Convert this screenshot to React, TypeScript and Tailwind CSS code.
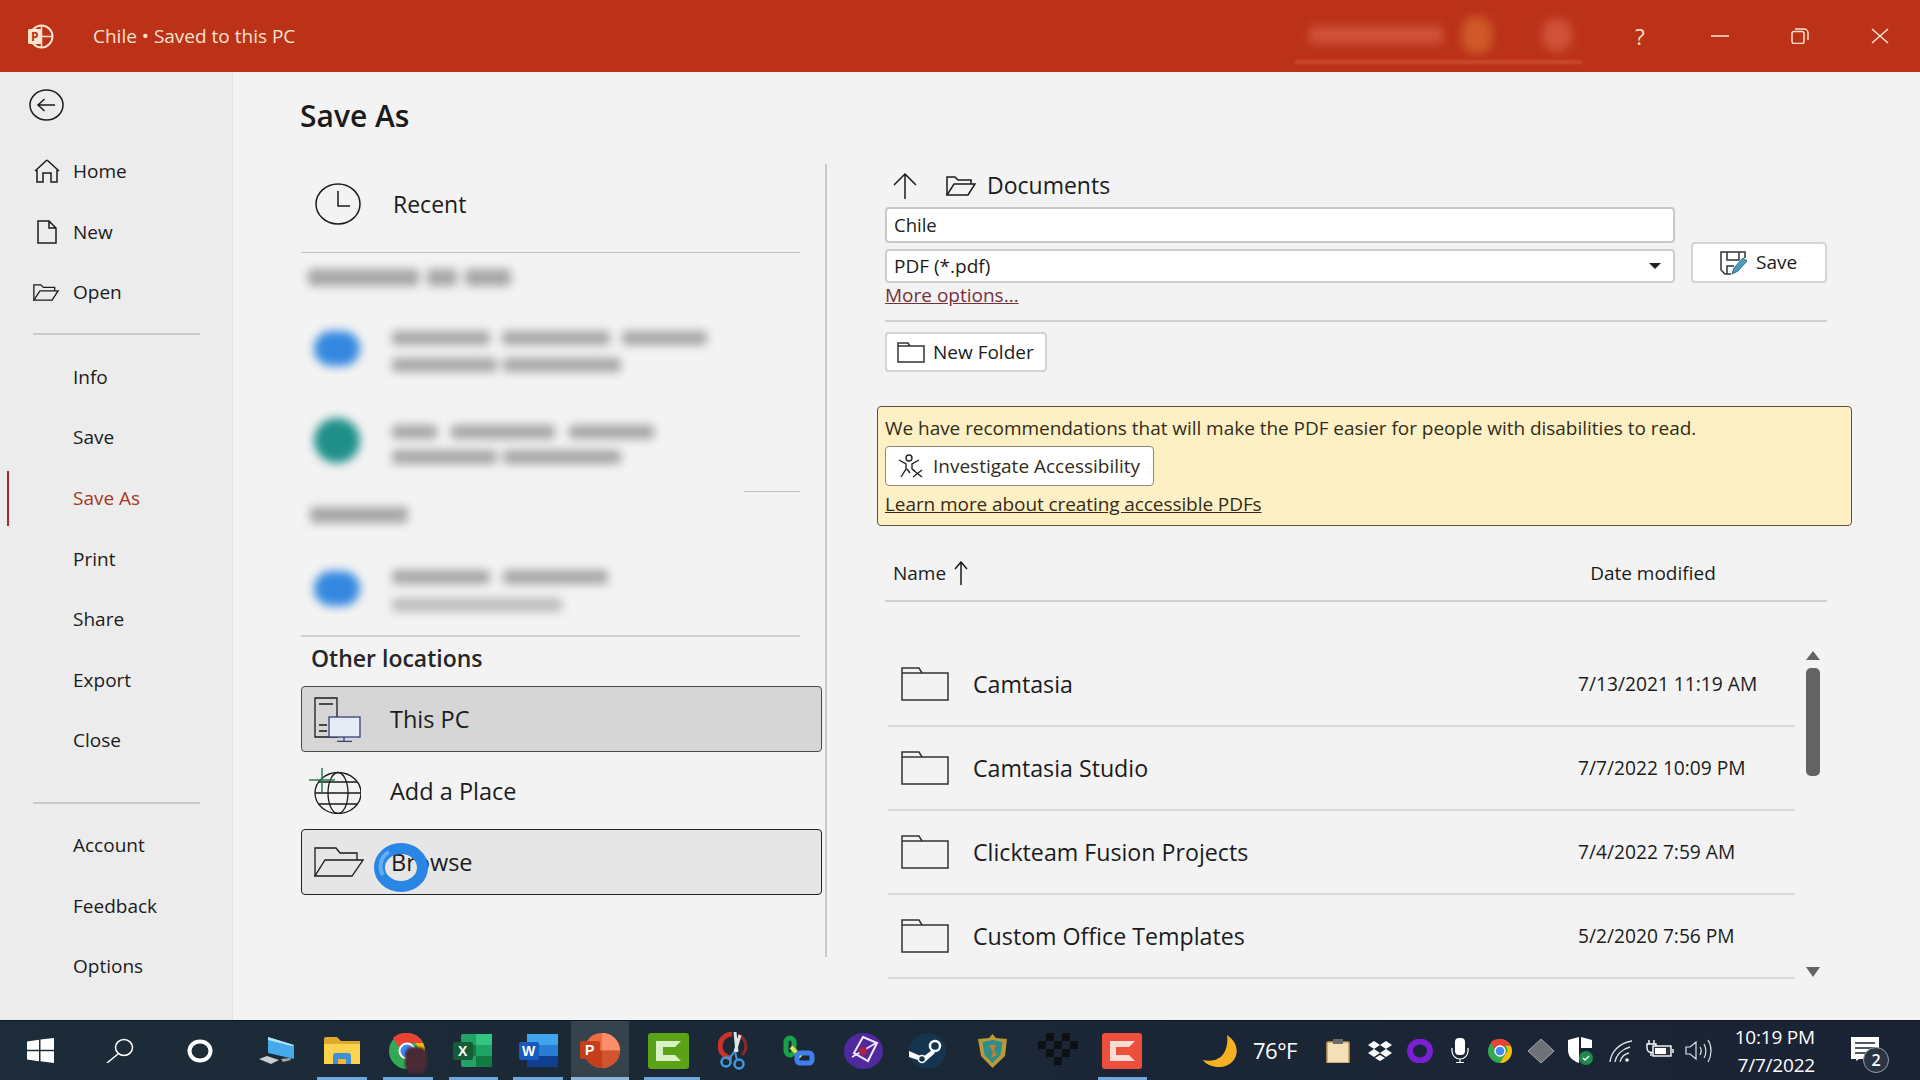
import type { ReactNode } from "react";

const Icon = ({ w, h, vb, children, className }: { w: number; h: number; vb?: string; children: ReactNode; className?: string }) => (
  <svg width={w} height={h} viewBox={vb ?? `0 0 ${w} ${h}`} fill="none" stroke="currentColor" strokeWidth={1.5} preserveAspectRatio="none" className={`shrink-0 ${className ?? ""}`}>
    {children}
  </svg>
);

const FolderOpenIcon = ({ w, h }: { w: number; h: number }) => (
  <Icon w={w} h={h} vb="0 0 30 20">
    <path d="M1 19V1h8l3 3h13v4" />
    <path d="M1 19h21l7-11H8z" />
  </Icon>
);

const FolderClosed = () => (
  <Icon w={48} h={34} vb="0 0 48 34" className="text-[#333]">
    <path d="M1 33V1h17l3 5h26v27z" />
    <path d="M1 6h20" />
  </Icon>
);

const PlainRow = ({ label, children, className }: { label: string; children?: ReactNode; className?: string }) => (
  <div className={`flex h-[60.6px] items-center ${className ?? ""}`}>
    {children ?? <span className="w-[73px]" />}
    <span>{label}</span>
  </div>
);

// blurred account details
const BlurLine = ({ segs, gap = 8, h = 14, tone = "bg-[#a6a6a6]", className }: { segs: number[]; gap?: number; h?: number; tone?: string; className?: string }) => (
  <div className={`flex blur-[5px] ${className ?? ""}`} style={{ gap, height: h }}>
    {segs.map((w, i) => (
      <div key={i} className={`rounded-sm ${tone}`} style={{ width: w }} />
    ))}
  </div>
);

const Blob = ({ w, h, tone, className }: { w: number; h: number; tone: string; className?: string }) => (
  <div className={`shrink-0 rounded-full blur-[5px] ${tone} ${className ?? ""}`} style={{ width: w, height: h }} />
);

const Cell = ({ className, running, light, children }: { className: string; running?: string; light?: boolean; children: ReactNode }) => (
  <div className={`relative flex h-full shrink-0 items-center justify-center ${className}`}>
    {children}
    {running && <span className={`absolute bottom-0 h-[3px] ${running} ${light ? "bg-[#8ab4d8]" : "bg-[#6fa8dc]"}`} />}
  </div>
);

const ChromeGlyph = ({ size }: { size: number }) => (
  <svg width={size} height={size} viewBox="0 0 36 36" className="shrink-0">
    <circle cx="18" cy="18" r="18" fill="#34a853" />
    <path d="M18 0a18 18 0 0 1 16 10H18a8 8 0 0 0-7.5 5L4 5a18 18 0 0 1 14-5z" fill="#ea4335" />
    <path d="M34 10a18 18 0 0 1-16 26l8-13a8 8 0 0 0 0-13z" fill="#fbbc05" />
    <circle cx="18" cy="18" r="8.5" fill="#fff" />
    <circle cx="18" cy="18" r="6.5" fill="#4285f4" />
  </svg>
);

const files = [
  ["Camtasia", "7/13/2021 11:19 AM"],
  ["Camtasia Studio", "7/7/2022 10:09 PM"],
  ["Clickteam Fusion Projects", "7/4/2022 7:59 AM"],
  ["Custom Office Templates", "5/2/2020 7:56 PM"],
];

export default function App() {
  return (
    <div className="flex h-screen w-[1920px] flex-col overflow-hidden bg-[#f3f3f3] font-['Open_Sans',sans-serif] text-[#1b1b1b]">
      {/* title bar */}
      <header className="relative flex h-[72px] shrink-0 items-center bg-[#bb3219] text-[#fbe3cc]">
        <svg width="27" height="25" viewBox="0 0 27 25" className="ml-[27px] shrink-0">
          <circle cx="14.5" cy="12.5" r="11" fill="none" stroke="#fbe3cc" strokeWidth="2" />
          <path d="M14.5 2v10.500H25M14.5 12.500V23" fill="none" stroke="#fbe3cc" strokeWidth="1.500" />
          <rect x="1" y="5" width="14" height="15" rx="1.500" fill="#fbe3cc" />
          <text x="4" y="17" fontSize="12" fontWeight="700" fill="#bb3219" fontFamily="Open Sans">P</text>
        </svg>
        <span className="ml-[39px] text-[19px]">Chile • Saved to this PC</span>
        <div className="ml-auto flex h-full w-[305px] flex-col">
          <div className="mt-[12px] flex h-[45px] items-center">
            <BlurLine segs={[134]} h={18} tone="bg-[#cf5238]" className="ml-[14px]" />
            <Blob w={30} h={38} tone="bg-[#cf5a28]" className="ml-[19px]" />
            <Blob w={30} h={34} tone="bg-[#cf5238]" className="ml-[50px]" />
          </div>
          <div className="mt-[3px] h-[4px] w-[287px] bg-[#c9482e] blur-[1px]" />
        </div>
        <div className="flex h-full items-center">
          <span className="flex w-[80px] justify-center text-[22px] leading-none">?</span>
          <span className="flex w-[80px] justify-center">
            <Icon w={18} h={2}><path d="M0 1h18" /></Icon>
          </span>
          <span className="flex w-[80px] justify-center">
            <Icon w={18} h={16}>
              <rect x="1" y="3.500" width="12" height="12" rx="2" />
              <path d="M4 1h9a4 4 0 0 1 4 4v7" />
            </Icon>
          </span>
          <span className="flex w-[80px] justify-center">
            <Icon w={18} h={16}><path d="M1 1l16 14M17 1L1 15" /></Icon>
          </span>
        </div>
      </header>

      <div className="flex min-h-0 flex-1">
        {/* backstage nav */}
        <nav className="flex w-[233px] shrink-0 flex-col border-r border-[#e2e2e2] bg-[#ececec] text-[19px]">
          <svg width="35" height="32" viewBox="0 0 35 32" fill="none" stroke="#1b1b1b" strokeWidth="1.500" className="ml-[29px] mt-[17px] shrink-0">
            <ellipse cx="17.500" cy="16" rx="16.500" ry="15" />
            <path d="M26 16H9M15.500 10L9 16l6.500 6" />
          </svg>
          <div className="mt-[20px]">
            <PlainRow label="Home">
              <Icon w={26} h={24} className="ml-[34px] mr-[13px]">
                <path d="M13 1L1 12M13 1l12 11M3 11v12h6v-9h8v9h6V11" />
              </Icon>
            </PlainRow>
            <PlainRow label="New">
              <Icon w={20} h={24} className="ml-[37px] mr-[16px]">
                <path d="M1 1h11l7 7v15H1zM12 1v7h7" />
              </Icon>
            </PlainRow>
            <PlainRow label="Open">
              <Icon w={26} h={17} vb="0 0 30 20" className="ml-[33px] mr-[14px]">
                <path d="M1 19V1h8l3 3h13v4" />
                <path d="M1 19h21l7-11H8z" />
              </Icon>
            </PlainRow>
          </div>
          <div className="ml-[33px] mt-[10px] h-[2px] w-[167px] bg-[#c9c9c9]" />
          <div className="mt-[12px]">
            {["Info", "Save"].map((l) => <PlainRow key={l} label={l} />)}
            <div className="relative">
              <span className="absolute left-[7px] top-[3px] h-[55px] w-[2px] bg-[#a4262c]" />
              <PlainRow label="Save As" className="text-[#a5371f]" />
            </div>
            {["Print", "Share", "Export", "Close"].map((l) => <PlainRow key={l} label={l} />)}
          </div>
          <div className="ml-[33px] mt-[31px] h-[2px] w-[167px] bg-[#c9c9c9]" />
          <div className="mt-[11px]">
            {["Account", "Feedback", "Options"].map((l) => <PlainRow key={l} label={l} />)}
          </div>
        </nav>

        <main className="min-w-0 flex-1 pl-[67px]">
          <h1 className="h-[92px] pt-[24px] text-[30px] font-semibold leading-[40px]">Save As</h1>
          <div className="flex">
            {/* locations */}
            <div className="w-[525px] shrink-0 pl-px">
              <div className="flex h-[88px] items-center pb-[8px] pl-[14px]">
                <svg width="46" height="42" viewBox="0 0 46 42" fill="none" stroke="#1b1b1b" strokeWidth="1.500">
                  <ellipse cx="23" cy="21" rx="22" ry="20" />
                  <path d="M23 8v15h12" />
                </svg>
                <span className="ml-[32px] text-[23px]">Recent</span>
              </div>
              <div className="h-px w-[499px] bg-[#c4c4c4]" />
              <BlurLine segs={[111, 30, 46]} gap={8} h={17} className="ml-[7px] mt-[16px]" />

              <div className="ml-[13px] mt-[45px] flex">
                <Blob w={46} h={35} tone="bg-[#3488e0]" />
                <div className="ml-[32px]">
                  <BlurLine segs={[98, 108, 85]} gap={12} h={14} />
                  <BlurLine segs={[105, 118]} gap={6} h={14} className="mt-[13px]" />
                </div>
              </div>
              <div className="ml-[13px] mt-[46px] flex">
                <Blob w={46} h={45} tone="bg-[#1f8f8a]" />
                <div className="ml-[32px] mt-[7px]">
                  <BlurLine segs={[45, 104, 85]} gap={14} h={14} />
                  <BlurLine segs={[105, 118]} gap={6} h={14} className="mt-[11px]" />
                </div>
              </div>
              <div className="ml-[443px] mt-[27px] h-px w-[56px] bg-[#c4c4c4]" />
              <BlurLine segs={[98]} h={16} className="ml-[9px] mt-[15px]" />
              <div className="ml-[13px] mt-[47px] flex">
                <Blob w={46} h={35} tone="bg-[#3488e0]" className="mt-[1px]" />
                <div className="ml-[32px]">
                  <BlurLine segs={[98, 105]} gap={13} h={14} />
                  <BlurLine segs={[170]} h={14} tone="bg-[#bdbdbd]" className="mt-[14px]" />
                </div>
              </div>
              <div className="mt-[23px] h-[2px] w-[499px] bg-[#cfcfcf]" />

              <div className="ml-[10px] mt-[5px] text-[23px] font-semibold leading-[32px] text-[#262626]">Other locations</div>
              <div className="mt-[12px] flex h-[66px] w-[521px] items-center rounded-[4px] border border-[#4a4a4a] bg-[#d6d6d6] pl-[12px] text-[23.5px]">
                <svg width="48" height="45" viewBox="0 0 48 45" fill="none" className="shrink-0">
                  <path d="M24 40H1V1h22v27" stroke="#1b1b1b" strokeWidth="1.300" />
                  <path d="M5 7h14M5 28h8M5 34h8" stroke="#1b1b1b" strokeWidth="1.300" />
                  <rect x="15" y="20" width="31" height="20" fill="#e6ebf5" stroke="#33407a" strokeWidth="1.300" />
                  <path d="M30 40v4M23 44.300h15" stroke="#33407a" strokeWidth="1.300" />
                </svg>
                <span className="ml-[28px] mt-[2px]">This PC</span>
              </div>
              <div className="flex h-[77px] items-center pl-[8px] text-[23.5px]">
                <svg width="52" height="46" viewBox="0 0 52 46" fill="none" className="shrink-0">
                  <g stroke="#1b1b1b" strokeWidth="1.300">
                    <ellipse cx="29" cy="25" rx="23" ry="20.500" />
                    <ellipse cx="29" cy="25" rx="10" ry="20.500" />
                    <path d="M6 25h46M10 14h38M10 36h38" />
                  </g>
                  <path d="M0 12h26M13 0v24" stroke="#2e7d4f" strokeWidth="1.500" />
                </svg>
                <span className="ml-[29px] mt-[2px]">Add a Place</span>
              </div>
              <div className="relative flex h-[66px] w-[521px] items-center rounded-[4px] border-[1.500px] border-[#222] bg-[#e6e6e6] pl-[12px] text-[23.5px]">
                <svg width="50" height="30" viewBox="0 0 50 30" fill="none" stroke="#1b1b1b" strokeWidth="1.300" className="shrink-0">
                  <path d="M1 29V1h21l4 5h17v7" />
                  <path d="M1 29h37L49 13H11z" />
                </svg>
                <span className="ml-[27px] mt-[2px]">Browse</span>
                {/* click highlight from the recording */}
                <svg width="54" height="49" viewBox="0 0 54 49" fill="none" className="absolute left-[72px] top-[13px]">
                  <ellipse cx="27" cy="24.500" rx="21.500" ry="19" stroke="#2a86e4" strokeWidth="11" />
                  <path d="M9 32C4 24 7 13 15 9" stroke="#62aef0" strokeWidth="4" />
                </svg>
              </div>
            </div>

            <div className="h-[793px] w-[2px] shrink-0 bg-[#c8c8c8]" />

            {/* file picker */}
            <div className="ml-[58px] w-[967px] shrink-0">
              <div className="flex h-[43px] items-center">
                <Icon w={24} h={26} className="ml-[8px]"><path d="M12 26V1M1 12L12 1l11 11" /></Icon>
                <span className="ml-[29px]"><FolderOpenIcon w={30} h={20} /></span>
                <span className="ml-[11px] text-[23px]">Documents</span>
              </div>
              <div className="flex w-[942px] items-end">
                <div className="w-[790px]">
                  <div className="flex h-[36px] items-center rounded-[4px] border-2 border-[#c8c8c8] bg-white pl-[7px] text-[18.5px]">Chile</div>
                  <div className="mt-[6px] flex h-[34px] items-center justify-between rounded-[4px] border-2 border-[#cdcdcd] bg-white pl-[7px] pr-[12px] text-[19px]">
                    <span>PDF (*.pdf)</span>
                    <svg width="12" height="6" viewBox="0 0 12 6"><path d="M0 0h12L6 6z" fill="#222" /></svg>
                  </div>
                </div>
                <button className="ml-[16px] flex h-[41px] w-[136px] items-center rounded-[4px] border-2 border-[#d4d4d4] bg-white pl-[27px] text-[19px]">
                  <svg width="28" height="24" viewBox="0 0 28 24" fill="none" className="shrink-0">
                    <path d="M11 23H5l-4-4V1h24v6" stroke="#333" strokeWidth="1.500" />
                    <path d="M7 1v8h12V1M7 23v-8h7" stroke="#333" strokeWidth="1.500" />
                    <path d="M12 23l2-6 9-10 4 3-9 10z" fill="#4b9db8" stroke="#2c6f86" strokeWidth="1" />
                  </svg>
                  <span className="ml-[8px]">Save</span>
                </button>
              </div>
              <div className="h-[24px] text-[19px] leading-[24px] text-[#78303a] underline">More options...</div>
              <div className="mt-[13px] h-[2px] w-[942px] bg-[#cfcfcf]" />
              <button className="mt-[10px] flex h-[40px] w-[162px] items-center rounded-[4px] border-2 border-[#d4d4d4] bg-white pl-[10px] text-[19px]">
                <Icon w={28} h={21} className="text-[#333]"><path d="M1 20V1h10l2 3h14v16zM1 4h12" /></Icon>
                <span className="ml-[8px]">New Folder</span>
              </button>

              <div className="-ml-[8px] mt-[34px] flex h-[120px] w-[975px] flex-col rounded-[4px] border-[1.500px] border-[#5f5236] bg-[#fdf0c4] pl-[7px] text-[19px] text-[#332c18]">
                <div className="mt-[8px] leading-[26px] tracking-[-0.04px]">We have recommendations that will make the PDF easier for people with disabilities to read.</div>
                <button className="mt-[5px] flex h-[40px] w-[269px] items-center rounded-[4px] border-[1.500px] border-[#8a8a80] bg-white pl-[12px]">
                  <svg width="26" height="24" viewBox="0 0 26 24" fill="none" stroke="#222" strokeWidth="1.400" className="shrink-0">
                    <circle cx="11" cy="4" r="3" />
                    <path d="M1 6l7 4v5l-5 8M21 6l-7 4v5l3 2M9 15l3 4" />
                    <path d="M15 16l9 7M24 16l-9 7" />
                  </svg>
                  <span className="ml-[9px]">Investigate Accessibility</span>
                </button>
                <div className="mt-[5px] leading-[26px] tracking-[-0.08px] underline">Learn more about creating accessible PDFs</div>
              </div>

              <div className="flex h-[74px] w-[942px] items-center pt-[20px] text-[19px]">
                <span className="ml-[8px]">Name</span>
                <Icon w={14} h={24} className="ml-[8px]"><path d="M7 24V1M1 8l6-7 6 7" /></Icon>
                <span className="ml-[622px]">Date modified</span>
              </div>
              <div className="h-[2px] w-[942px] bg-[#cfcfcf]" />

              <div className="mt-[41px] flex">
                <div className="ml-[3px] w-[907px]">
                  {files.map(([name, date]) => (
                    <div key={name} className="flex h-[84px] items-center border-b-2 border-[#d8d8d8] pl-[13px]">
                      <FolderClosed />
                      <span className="ml-[24px] w-[605px] shrink-0 text-[23.2px]">{name}</span>
                      <span className="text-[19.2px]">{date}</span>
                    </div>
                  ))}
                </div>
                <div className="ml-[11px] mt-[8px] flex h-[326px] w-[14px] flex-col items-center">
                  <svg width="14" height="9" viewBox="0 0 14 9" className="shrink-0"><path d="M7 0l7 9H0z" fill="#636363" /></svg>
                  <div className="mt-[8px] h-[108px] w-[14px] rounded-[5px] bg-[#636363]" />
                  <svg width="14" height="10" viewBox="0 0 14 10" className="mt-auto shrink-0"><path d="M0 0h14L7 10z" fill="#636363" /></svg>
                </div>
              </div>
            </div>
          </div>
        </main>
      </div>

      {/* windows taskbar */}
      <footer className="flex h-[60px] shrink-0 border-t border-[#0e1620] bg-linear-to-r from-[#1c2c38] to-[#1a2334] text-white">
        <Cell className="w-[80px]">
          <svg width="27" height="25" viewBox="0 0 27 25"><path d="M0 3.500l12-1.700v10H0zM13.500 1.600L27 0v11.800H13.500zM0 13.200h12v10L0 21.500zM13.500 13.200H27V25l-13.500-1.800z" fill="#fff" /></svg>
        </Cell>
        <Cell className="w-[80px]">
          <svg width="28" height="25" viewBox="0 0 28 25" fill="none" stroke="#fff" strokeWidth="1.500"><ellipse cx="18" cy="9.500" rx="8.500" ry="8" /><path d="M12 16L1 25" /></svg>
        </Cell>
        <Cell className="w-[80px]">
          <svg width="26" height="24" viewBox="0 0 26 24" fill="none" stroke="#fff" strokeWidth="4"><ellipse cx="13" cy="12" rx="10.500" ry="9.500" /></svg>
        </Cell>
        <Cell className="w-[73px]">
          <svg width="36" height="28" viewBox="0 0 36 28">
            <path d="M9 0l26 8v14L9 16z" fill="#45a9ea" />
            <path d="M9 0l26 8-2 1L9 3z" fill="#b8e0f7" />
            <path d="M0 22l8-3 12 4-8 4z" fill="#c9ced2" />
            <path d="M22 22l9-1 1 2-8 2z" fill="#9ea6ac" />
          </svg>
        </Cell>
        <Cell className="w-[57px]" running="left-[4px] right-[3px]">
          <svg width="36" height="27" viewBox="0 0 36 27">
            <path d="M0 2a2 2 0 0 1 2-2h11l4 4h19v23H0z" fill="#e2a72d" />
            <rect y="7" width="36" height="20" rx="1" fill="#fcd34d" />
            <path d="M9 27v-8a3 3 0 0 1 3-3h12a3 3 0 0 1 3 3v8h-5v-5h-8v5z" fill="#3f8fd6" />
            <rect x="14" y="22" width="8" height="5" fill="#f1b52f" />
          </svg>
        </Cell>
        <Cell className="w-[69px] pl-[4px]" running="left-[13px] right-[6px]">
          <div className="relative">
            <ChromeGlyph size={36} />
            <span className="absolute -bottom-[4px] left-[16px] h-[26px] w-[22px] rounded-[8px] bg-[#4a2a34] blur-[1px]" />
          </div>
        </Cell>
        <Cell className="w-[66px]" running="left-[10px] right-[7px]">
          <svg width="39" height="33" viewBox="0 0 39 33">
            <rect x="8" width="31" height="33" rx="2" fill="#21a366" />
            <rect x="23" width="16" height="11" fill="#33c481" />
            <rect x="8" y="11" width="15" height="11" fill="#107c41" />
            <rect x="23" y="22" width="16" height="11" fill="#107c41" />
            <rect y="8" width="20" height="18" rx="2" fill="#185c37" />
            <text x="5" y="22" fontSize="14" fontWeight="700" fill="#fff" fontFamily="Liberation Sans">X</text>
          </svg>
        </Cell>
        <Cell className="w-[66px]" running="left-[8px] right-[8px]">
          <svg width="39" height="33" viewBox="0 0 39 33">
            <rect x="8" width="31" height="33" rx="2" fill="#2b7cd3" />
            <rect x="8" width="31" height="11" fill="#41a5ee" />
            <rect x="8" y="22" width="31" height="11" fill="#103f91" />
            <rect y="8" width="20" height="18" rx="2" fill="#185abd" />
            <text x="3" y="22" fontSize="14" fontWeight="700" fill="#fff" fontFamily="Liberation Sans">W</text>
          </svg>
        </Cell>
        <Cell className="w-[58px] bg-[#36434d]" running="left-0 right-0" light>
          <svg width="40" height="35" viewBox="0 0 40 35">
            <ellipse cx="22" cy="17.500" rx="18" ry="17.500" fill="#ed6c47" />
            <path d="M22 0a18 17.500 0 0 1 18 17.500H22z" fill="#ff8f6b" />
            <path d="M22 17.500h18A18 17.500 0 0 1 22 35z" fill="#d35230" />
            <path d="M22 17.500V35A18 17.500 0 0 1 4 17.500z" fill="#c43e1c" />
            <rect y="8" width="20" height="18" rx="2" fill="#c43e1c" />
            <text x="5" y="22" fontSize="14" fontWeight="700" fill="#fff" fontFamily="Liberation Sans">P</text>
          </svg>
        </Cell>
        <Cell className="ml-[7px] w-[64px]" running="left-[8px] right-0">
          <svg width="41" height="36" viewBox="0 0 41 36">
            <rect width="41" height="36" rx="3" fill="#5aa317" />
            <path d="M8 28V8h25l-6 6H15v8h12l6 6z" fill="#d9f0c4" />
          </svg>
        </Cell>
        <Cell className="w-[67px]">
          <svg width="32" height="38" viewBox="0 0 32 38" fill="none">
            <path d="M14 2a12 12 0 0 0 0 24" stroke="#c9342a" strokeWidth="5" />
            <path d="M20 3a12 12 0 0 1 4 20" stroke="#8e2a26" strokeWidth="3" />
            <path d="M17 0l2 20M22 3l-5 17" stroke="#e4e4e4" strokeWidth="3" />
            <circle cx="8" cy="30" r="4.500" stroke="#3f9ae0" strokeWidth="2.500" />
            <circle cx="21" cy="32" r="4.500" stroke="#3f9ae0" strokeWidth="2.500" />
            <path d="M11 27l5-7M19 28l-2-8" stroke="#3f9ae0" strokeWidth="2" />
          </svg>
        </Cell>
        <Cell className="w-[64px]">
          <svg width="32" height="32" viewBox="0 0 32 32" fill="none">
            <rect x="3" y="3" width="8" height="17" rx="4" stroke="#16a34a" strokeWidth="5" />
            <path d="M8 12l10 10" stroke="#e8df5a" strokeWidth="4" />
            <rect x="14" y="18" width="15" height="10" rx="3" stroke="#3f7ff0" strokeWidth="5" />
          </svg>
        </Cell>
        <Cell className="w-[64px]">
          <svg width="39" height="36" viewBox="0 0 39 36" fill="none">
            <ellipse cx="19.500" cy="18" rx="19.500" ry="18" fill="#4e2a9e" />
            <path d="M19 4l14 6-9 18-14-8z" stroke="#f0eaff" strokeWidth="2" />
            <path d="M8 24l24-14" stroke="#f0eaff" strokeWidth="1.500" />
            <circle cx="19" cy="18" r="4" fill="#b0203c" />
          </svg>
        </Cell>
        <Cell className="w-[64px]">
          <svg width="37" height="36" viewBox="0 0 37 36" fill="none">
            <ellipse cx="18.500" cy="18" rx="18.500" ry="18" fill="#15344f" />
            <circle cx="26" cy="13" r="5" stroke="#fff" strokeWidth="2.500" />
            <path d="M0 18l14 6 9-7 3 3-9 8-5 0L0 24z" fill="#fff" />
            <circle cx="13" cy="26" r="3.500" fill="#15344f" stroke="#fff" strokeWidth="1.500" />
          </svg>
        </Cell>
        <Cell className="w-[66px]">
          <svg width="29" height="34" viewBox="0 0 29 34">
            <path d="M14.500 0L18 4l11 1-2 17-12.500 12L3 22 0 5l11-1z" fill="#b99a37" />
            <path d="M14.500 6l10 2-2 13-8 8-8-8-2-13z" fill="#2f8e8a" />
            <path d="M11 11h7l-2 5 3 5-6 3 2-6z" fill="#d07a2a" />
          </svg>
        </Cell>
        <Cell className="w-[66px]">
          <svg width="40" height="36" viewBox="0 0 40 36" fill="#0d1014">
            <path d="M0 8h8v8H0zM8 0h8v8H8zM24 0h8v8h-8zM32 8h8v8h-8zM16 8h8v8h-8zM8 16h8v8H8zM24 16h8v8h-8zM16 24h8v8h-8z" />
          </svg>
        </Cell>
        <Cell className="w-[62px]" running="left-[7px] right-[6px]">
          <svg width="40" height="36" viewBox="0 0 40 36">
            <rect width="40" height="36" rx="3" fill="#ee4f3c" />
            <path d="M8 28V8h25l-6 6H14v8h13l6 6z" fill="#fbdcd3" />
          </svg>
        </Cell>

        <Cell className="ml-[44px] w-[48px]">
          <svg width="36" height="32" viewBox="0 0 36 32"><path d="M24 0c9 6 12 15 8 23-4 8-15 11-23 8-4-1-7-3-9-6 8 2 17 0 21-7 3-5 4-12 3-18z" fill="#f4b223" /></svg>
        </Cell>
        <span className="ml-[8px] flex w-[60px] items-center text-[22px] tracking-[-0.5px]">76°F</span>
        <Cell className="ml-[2px] w-[46px]">
          <svg width="24" height="24" viewBox="0 0 24 24"><rect x="1" y="3" width="22" height="21" rx="1" fill="#f3dfb8" stroke="#c79a5a" strokeWidth="1.500" /><rect x="7" y="0" width="10" height="5" fill="#6b6b6b" /></svg>
        </Cell>
        <Cell className="w-[38px]">
          <svg width="26" height="20" viewBox="0 0 26 20"><path d="M7 0l6 4-6 4-6-4zM19 0l6 4-6 4-6-4zM7 8l6 4-6 4-6-4zM19 8l6 4-6 4-6-4zM13 14l5 3-5 3-5-3z" fill="#fff" /></svg>
        </Cell>
        <Cell className="w-[42px]">
          <svg width="26" height="24" viewBox="0 0 26 24" fill="none"><ellipse cx="13" cy="12" rx="10" ry="9.500" stroke="#7a1fd1" strokeWidth="6" /></svg>
        </Cell>
        <Cell className="w-[37px]">
          <svg width="18" height="25" viewBox="0 0 18 25" fill="none">
            <rect x="4" width="10" height="17" rx="4" fill="#fff" />
            <path d="M1 10v3a8 8 0 0 0 16 0v-3M9 21v4M5 24.500h8" stroke="#fff" strokeWidth="1.200" />
          </svg>
        </Cell>
        <Cell className="w-[44px]"><ChromeGlyph size={24} /></Cell>
        <Cell className="w-[37px]">
          <svg width="26" height="24" viewBox="0 0 26 24"><path d="M13 0l13 12-13 12L0 12z" fill="#6e7276" stroke="#a3a7ab" strokeWidth="1" /></svg>
        </Cell>
        <Cell className="w-[41px]">
          <svg width="26" height="28" viewBox="0 0 26 28">
            <path d="M12 0L1 3v10c0 7 5 11 11 13z" fill="#fff" />
            <path d="M14 0l11 3v8H14z" fill="#fff" />
            <circle cx="19" cy="21" r="7" fill="#1f8a4c" />
            <path d="M16 21l2 2 4-4" stroke="#fff" strokeWidth="1.400" fill="none" />
          </svg>
        </Cell>
        <Cell className="w-[41px]">
          <svg width="24" height="22" viewBox="0 0 24 22" fill="none" stroke="#dfe3e8" strokeWidth="1.300">
            <path d="M1 22C2 12 10 3 23 1M6 22c1-7 7-13 15-15M11 22c1-4 4-8 9-9" />
            <circle cx="18" cy="20" r="1.800" fill="#fff" stroke="none" />
          </svg>
        </Cell>
        <Cell className="w-[37px]">
          <svg width="28" height="22" viewBox="0 0 28 22" fill="none" stroke="#fff" strokeWidth="1.400">
            <path d="M3 0v4M8 0v4M1 4h9v4a4 4 0 0 1-9 0zM5 12v4" />
            <rect x="7" y="6" width="18" height="10" fill="#2a3340" />
            <rect x="9" y="8" width="11" height="6" fill="#fff" stroke="none" />
            <path d="M27 9v4" />
          </svg>
        </Cell>
        <Cell className="w-[41px]">
          <svg width="28" height="24" viewBox="0 0 28 24" fill="none" stroke="#dfe3e8" strokeWidth="1.200">
            <path d="M1 8h4l6-5v17l-6-5H1zM15 8c1.500 2 1.500 5 0 8M19 5c2.500 4 2.500 10 0 14M23 1c4 6 4 15 0 22" />
          </svg>
        </Cell>
        <div className="ml-[14px] flex w-[82px] flex-col items-end justify-center whitespace-nowrap text-[19px] leading-[28px] tracking-[-0.2px]">
          <span>10:19 PM</span>
          <span>7/7/2022</span>
        </div>
        <Cell className="ml-[20px] w-[68px]">
          <div className="relative h-[28px] w-[28px]">
            <svg width="28" height="24" viewBox="0 0 28 24" className="absolute -left-[4px] top-0"><path d="M0 0h28v22H8l-3 2v-2H0z" fill="#fff" /><path d="M4 6h20M4 11h20M4 16h12" stroke="#1a2334" strokeWidth="1.500" /></svg>
            <span className="absolute -bottom-[8px] left-[8px] flex h-[26px] w-[26px] items-center justify-center rounded-full border border-[#9aa0a6] bg-[#2b3442] text-[16px] font-semibold">2</span>
          </div>
        </Cell>
      </footer>
    </div>
  );
}
